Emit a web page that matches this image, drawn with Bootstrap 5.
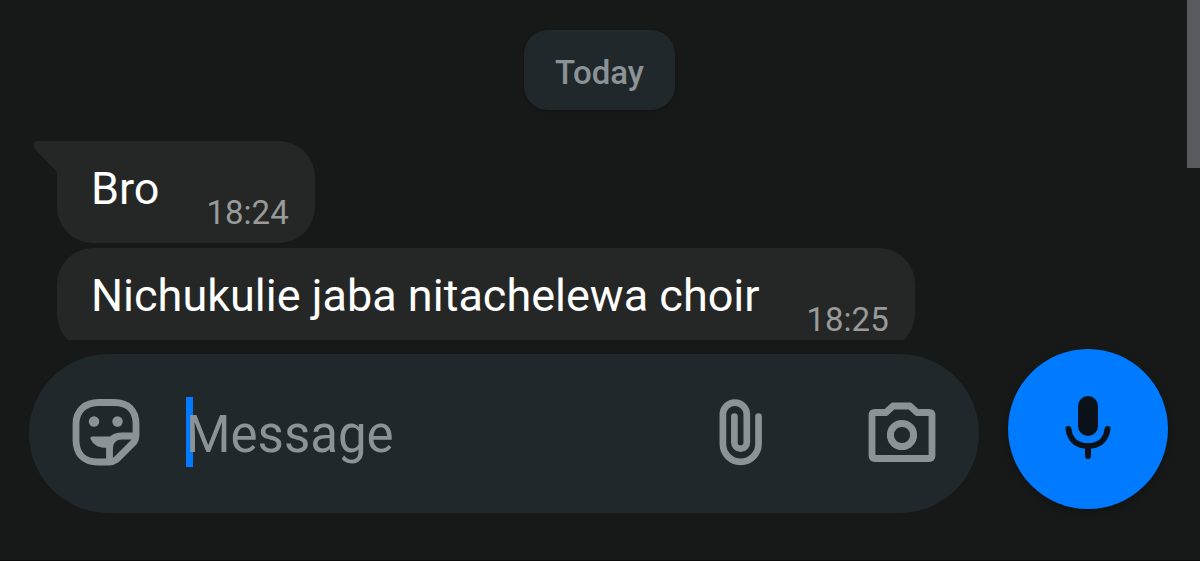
<!DOCTYPE html>
<html lang="sw">
<head>
<meta charset="utf-8">
<meta name="viewport" content="width=device-width, initial-scale=1">
<title>Chat</title>
<link href="https://cdn.jsdelivr.net/npm/bootstrap@5.3.0/dist/css/bootstrap.min.css" rel="stylesheet">
<style>
  body { background: #171918; color: #fff; font-family: Roboto, "Noto Sans", sans-serif; }
  .chat-log { min-height: 0; padding: 30px 32px 0 57px; }
  .day-chip { background: #20282b; color: #8b9396; border-radius: 24px; font-size: 33px; font-weight: 500; line-height: 40px; padding: 23px 31px 17px; margin: 0 0 31px -26px; box-shadow: 0 1px 3px #0004; }
  .bubble { background: #252726; border-radius: 36px; height: 102px; padding: 0 26px 0 34px; gap: 47px; margin-bottom: 5px; }
  .bubble.first { border-top-left-radius: 0; }
  .bubble p { font-size: 45px; line-height: 96px; }
  .bubble time { color: #999b9a; font-size: 33px; line-height: 40px; margin-bottom: 10px; }
  .tail { left: -24px; top: 0; }
  .scroll-thumb { width: 13px; height: 168px; background: #585b5d; }
  .composer { padding: 9px 32px 47px 29px; gap: 29px; border-bottom: 1px solid #0b0b0c; }
  .field { background: #20282b; border-radius: 80px; height: 159px; padding: 0 42px 4px 40px; margin-top: 5px; color: #8b9396; }
  .icon-btn { border: 0; background: none; color: inherit; padding: 0; line-height: 0; }
  .entry { margin: 0 44px 0 42px; min-width: 0; }
  .entry input { border: 0; background: none; color: #fff; font-size: 51px; line-height: 64px; height: 70px; padding: 6px 0 0; outline: 0; }
  .entry input::placeholder { color: #8b9396; opacity: 1; }
  .caret { left: 0; top: 0; width: 7px; height: 70px; background: #007bff; }
  .attach { margin-right: 99px; }
  .mic-btn { width: 160px; height: 160px; border: 0; border-radius: 50%; background: #007bff; color: #0b1118; padding: 0; box-shadow: 0 3px 6px #0004; }
</style>
</head>
<body class="vh-100 d-flex flex-column overflow-hidden position-relative">
  <main class="chat-log flex-grow-1 overflow-hidden d-flex flex-column align-items-start">
    <div class="day-chip align-self-center flex-shrink-0">Today</div>
    <article class="bubble first position-relative d-flex align-items-end flex-shrink-0">
      <svg class="tail position-absolute" width="25" height="34" viewBox="0 0 25 34" aria-hidden="true"><path fill="#252726" d="M6 0H25V34Q24 30 20 27L2 8Q-1 3 2 1Q3 0 6 0Z"/></svg>
      <p class="mb-0 align-self-start">Bro</p>
      <time>18:24</time>
    </article>
    <article class="bubble d-flex align-items-end flex-shrink-0">
      <p class="mb-0 align-self-start">Nichukulie jaba nitachelewa choir</p>
      <time>18:25</time>
    </article>
  </main>
  <div class="scroll-thumb position-absolute top-0 end-0"></div>

  <form class="composer d-flex align-items-start flex-shrink-0">
    <div class="field flex-grow-1 d-flex align-items-center">
      <button type="button" class="icon-btn" aria-label="Stickers">
        <svg width="75" height="72" viewBox="0 0 75 72" fill="none" stroke="currentColor" stroke-width="6.8" stroke-linejoin="round">
          <path d="M30 6.500H45C59 6.500 67 14.500 67 28V39.500Q67 43 65 46L47.500 63.500Q44 66 40 66H29C14 66 7 57 7 44V28C7 14.500 16 6.500 30 6.500Z"/>
          <path d="M67 40H53Q40.500 40 40.500 53V66"/>
          <g fill="currentColor" stroke="none"><circle cx="25" cy="25.500" r="5.200"/><circle cx="48.500" cy="25.500" r="5.200"/><path d="M23 40.500H44L41 52Q26 53 21.500 43Q21 40.500 23 40.500Z"/></g>
        </svg>
      </button>
      <div class="entry flex-grow-1 position-relative">
        <span class="caret position-absolute"></span>
        <input class="w-100 d-block position-relative" type="text" placeholder="Message" aria-label="Message">
      </div>
      <button type="button" class="icon-btn attach" aria-label="Attach">
        <svg width="44" height="72" viewBox="0 0 44 72" fill="none" stroke="currentColor" stroke-width="6.700" stroke-linecap="round">
          <path d="M39.500 20.500V48A17.800 17.800 0 0 1 3.900 48V17.500A12 12 0 0 1 27.800 17.500V46.500A6.200 6.200 0 0 1 15.400 46.500V20.500"/>
        </svg>
      </button>
      <button type="button" class="icon-btn" aria-label="Camera">
        <svg width="75" height="72" viewBox="0 0 75 72" fill="none" stroke="currentColor" stroke-width="6.800" stroke-linejoin="round">
          <path d="M13 16.500H24L31 10H48L55 16.500H67Q70 16.500 70 19.500V59.500Q70 62.500 67 62.500H13Q10 62.500 10 59.500V19.500Q10 16.500 13 16.500Z"/>
          <circle cx="40" cy="39" r="11.600" stroke-width="7"/>
        </svg>
      </button>
    </div>
    <button type="button" class="mic-btn flex-shrink-0" aria-label="Record voice message">
      <svg class="d-block mx-auto" width="48" height="66" viewBox="0 0 48 66" fill="none" stroke="currentColor" stroke-width="6" stroke-linecap="round">
        <rect x="14" y="0" width="20" height="40" rx="10" fill="currentColor" stroke="none"/>
        <path d="M4.500 33C6 45 14 50 24 50S42 45 43.500 33M24 51V60"/>
      </svg>
    </button>
  </form>
<script src="https://cdn.jsdelivr.net/npm/bootstrap@5.3.0/dist/js/bootstrap.bundle.min.js"></script>
</body>
</html>
